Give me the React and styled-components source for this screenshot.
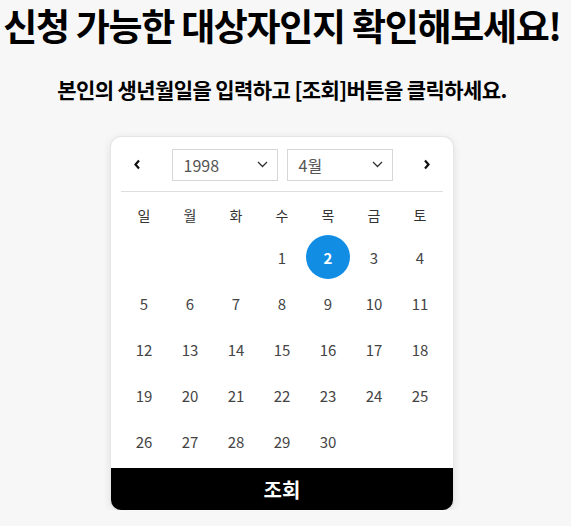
import React from "react";
import styled, { createGlobalStyle } from "styled-components";

const Global = createGlobalStyle`
  html, body { margin: 0; padding: 0; background: #f7f7f7; }
  body { font-family: "Noto Sans CJK KR", "Noto Sans", sans-serif; }
`;

const Page = styled.div`
  width: 564px;
  display: flex;
  flex-direction: column;
  align-items: center;
  overflow: visible;
`;

const Title = styled.h1`
  margin: 0;
  font-size: 37px;
  line-height: 50px;
  font-weight: 700;
  letter-spacing: -1.3px;
  color: #000;
  white-space: nowrap;
`;

const Subtitle = styled.p`
  margin: 24px 0 0;
  font-size: 21px;
  line-height: 30px;
  font-weight: 700;
  letter-spacing: -0.6px;
  color: #000;
  white-space: nowrap;
`;

const Card = styled.div`
  margin-top: 33px;
  width: 342px;
  background: #fff;
  border-radius: 10px;
  box-shadow: 0 0 0 1px #e6e6e6, 0 2px 10px rgba(0, 0, 0, 0.12);
  overflow: hidden;
  display: flex;
  flex-direction: column;
`;

const Header = styled.div`
  margin: 0 10px;
  height: 55px;
  display: flex;
  align-items: center;
  justify-content: space-between;
  border-bottom: 1px solid #dedede;
  box-sizing: border-box;
  padding-top: 1px;
`;

const NavBtn = styled.button`
  width: 32px;
  height: 32px;
  border: none;
  background: none;
  padding: 0;
  display: flex;
  align-items: center;
  justify-content: center;
  cursor: pointer;
`;

const Selects = styled.div`
  display: flex;
  gap: 9px;
`;

const Select = styled.div`
  width: 106px;
  height: 32px;
  box-sizing: border-box;
  border: 1px solid #d6d6d6;
  display: flex;
  align-items: center;
  justify-content: space-between;
  padding: 0 9px 0 11px;
  font-size: 16px;
  color: #555;
`;

const Grid = styled.div`
  margin: 0 10px;
  display: grid;
  grid-template-columns: repeat(7, 46px);
`;

const Weekday = styled.div`
  height: 42px;
  box-sizing: border-box;
  padding-top: 4px;
  display: flex;
  align-items: center;
  justify-content: center;
  font-size: 14px;
  color: #333;
`;

const Day = styled.div`
  height: 46px;
  display: flex;
  align-items: center;
  justify-content: center;
`;

const DayNum = styled.span`
  width: 44px;
  height: 44px;
  border-radius: 50%;
  display: flex;
  align-items: center;
  justify-content: center;
  font-size: 15px;
  color: ${(p) => (p.$selected ? "#fff" : "#444")};
  font-weight: ${(p) => (p.$selected ? 700 : 400)};
  background: ${(p) => (p.$selected ? "#118de3" : "transparent")};
`;

const Submit = styled.button`
  margin-top: 4px;
  height: 42px;
  border: none;
  background: #000;
  color: #fff;
  font-family: inherit;
  font-size: 20px;
  font-weight: 700;
  cursor: pointer;
`;

const Chevron = () => (
  <svg width="11" height="7" viewBox="0 0 11 7">
    <path d="M1 1l4.5 4.5L10 1" fill="none" stroke="#333" strokeWidth="1.3" />
  </svg>
);

const Arrow = ({ dir }) => (
  <svg width="8" height="11" viewBox="0 0 8 11">
    <path
      d={dir === "left" ? "M6 1.5L2.5 5.5 6 9.5" : "M2 1.5l3.5 4L2 9.5"}
      fill="none"
      stroke="#111"
      strokeWidth="2.2"
    />
  </svg>
);

const weekdays = ["일", "월", "화", "수", "목", "금", "토"];

export default function App() {
  const cells = [];
  for (let i = 0; i < 3; i++) cells.push(null);
  for (let d = 1; d <= 30; d++) cells.push(d);
  return (
    <Page>
      <Global />
      <Title>신청 가능한 대상자인지 확인해보세요!</Title>
      <Subtitle>본인의 생년월일을 입력하고 [조회]버튼을 클릭하세요.</Subtitle>
      <Card>
        <Header>
          <NavBtn aria-label="이전 달">
            <Arrow dir="left" />
          </NavBtn>
          <Selects>
            <Select>
              1998
              <Chevron />
            </Select>
            <Select>
              4월
              <Chevron />
            </Select>
          </Selects>
          <NavBtn aria-label="다음 달">
            <Arrow dir="right" />
          </NavBtn>
        </Header>
        <Grid>
          {weekdays.map((w) => (
            <Weekday key={w}>{w}</Weekday>
          ))}
          {cells.map((d, i) => (
            <Day key={i}>
              {d && <DayNum $selected={d === 2}>{d}</DayNum>}
            </Day>
          ))}
        </Grid>
        <Submit>조회</Submit>
      </Card>
    </Page>
  );
}
